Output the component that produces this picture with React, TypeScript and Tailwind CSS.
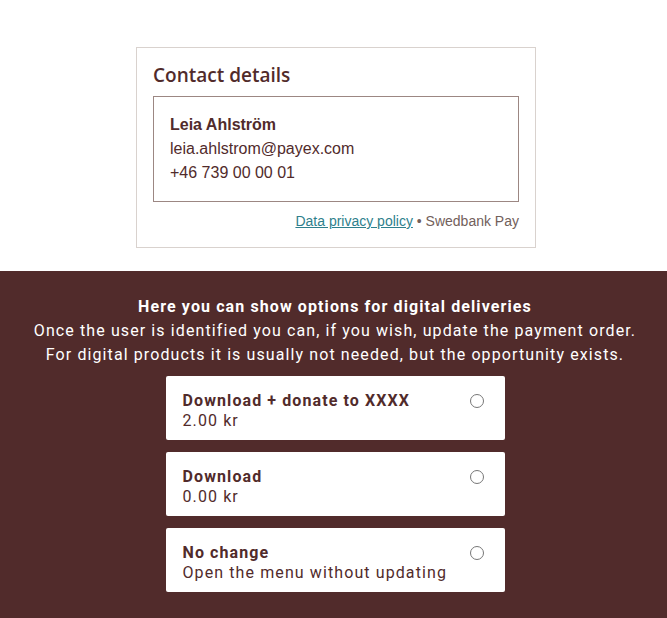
import React from "react";

const options = [
  { title: "Download + donate to XXXX", sub: "2.00 kr" },
  { title: "Download", sub: "0.00 kr" },
  { title: "No change", sub: "Open the menu without updating" },
];

export default function App() {
  return (
    <div className="min-h-[618px] bg-white flex flex-col">
      <div className="flex justify-center pt-[47px] pb-[23px] pl-[5px]">
        <div className="w-[400px] border border-[#d9d2ce] bg-white px-4 pt-[15px] pb-[16px]">
          <h2
            className="text-[19px] font-semibold text-[#512b2b] leading-[24px]"
            style={{ fontFamily: "'Open Sans', sans-serif" }}
          >
            Contact details
          </h2>
          <div
            className="mt-[9px] border border-[#9c8783] px-4 pt-[16px] pb-[16px] text-[16px] leading-[24px] text-[#512b2b]"
            style={{ fontFamily: "'Liberation Sans', Arial, sans-serif" }}
          >
            <div className="font-bold">Leia Ahlström</div>
            <div>leia.ahlstrom@payex.com</div>
            <div>+46 739 00 00 01</div>
          </div>
          <div
            className="mt-[9px] text-right text-[14px] leading-[20px] text-[#72605b]"
            style={{ fontFamily: "'Liberation Sans', Arial, sans-serif" }}
          >
            <a href="#" className="underline text-[#2e7f8c]">
              Data privacy policy
            </a>{" "}
            • Swedbank Pay
          </div>
        </div>
      </div>
      <div
        className="flex-1 bg-[#512b2b] pt-[24px] pb-[26px] pl-[3px] flex flex-col items-center"
        style={{ fontFamily: "Roboto, sans-serif" }}
      >
        <div className="text-center text-white text-[16px] leading-[24px] tracking-[1.1px]">
          <div className="font-bold">Here you can show options for digital deliveries</div>
          <div>Once the user is identified you can, if you wish, update the payment order.</div>
          <div>For digital products it is usually not needed, but the opportunity exists.</div>
        </div>
        <div className="mt-[9px] flex flex-col gap-3 w-[339px]">
          {options.map((o) => (
            <div
              key={o.title}
              className="h-16 bg-white rounded-[2px] pl-[17px] pr-[21px] pt-[15px] flex justify-between text-[#512b2b] tracking-[1.1px]"
            >
              <div className="text-[16px] leading-[20px]">
                <div className="font-bold">{o.title}</div>
                <div>{o.sub}</div>
              </div>
              <div className="mt-[3px] w-[14px] h-[14px] rounded-full border border-[#777]" />
            </div>
          ))}
        </div>
      </div>
    </div>
  );
}
